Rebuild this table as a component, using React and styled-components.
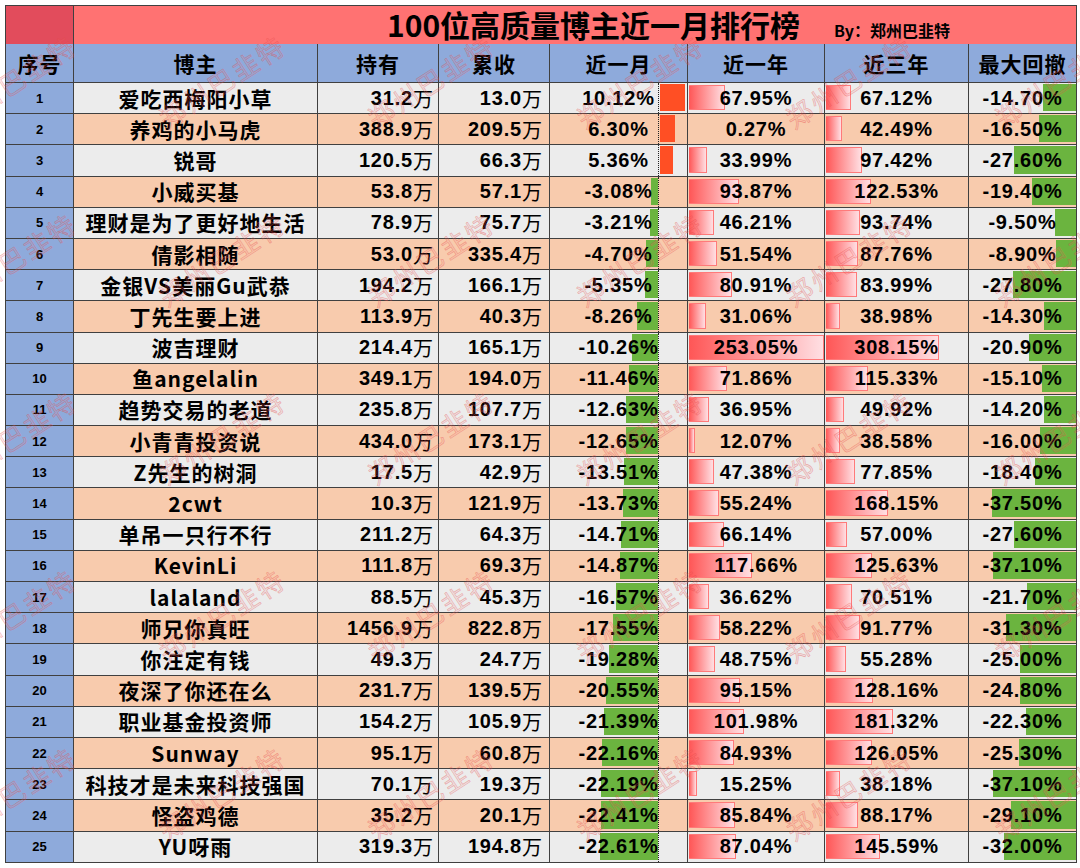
import React from 'react';
import styled, { createGlobalStyle } from 'styled-components';

const COLS = '68px 244px 121px 111px 138px 137px 144px 108px';
const LINE = '#404040';
const CJK = '"Noto Sans CJK SC", "Noto Sans", sans-serif';
const NUM = '"Liberation Sans", Arial, "Noto Sans CJK SC", sans-serif';

const BLUE = '#8eaadb';
const GREY = '#ececec';
const PEACH = '#f8cbad';

const rows = [
    ['爱吃西梅阳小草', '31.2', '13.0', '10.12', '67.95', '67.12', '-14.70'],
    ['养鸡的小马虎', '388.9', '209.5', '6.30', '0.27', '42.49', '-16.50'],
    ['锐哥', '120.5', '66.3', '5.36', '33.99', '97.42', '-27.60'],
    ['小威买基', '53.8', '57.1', '-3.08', '93.87', '122.53', '-19.40'],
    ['理财是为了更好地生活', '78.9', '75.7', '-3.21', '46.21', '93.74', '-9.50'],
    ['倩影相随', '53.0', '335.4', '-4.70', '51.54', '87.76', '-8.90'],
    ['金银VS美丽Gu武恭', '194.2', '166.1', '-5.35', '80.91', '83.99', '-27.80'],
    ['丁先生要上进', '113.9', '40.3', '-8.26', '31.06', '38.98', '-14.30'],
    ['波吉理财', '214.4', '165.1', '-10.26', '253.05', '308.15', '-20.90'],
    ['鱼angelalin', '349.1', '194.0', '-11.46', '71.86', '115.33', '-15.10'],
    ['趋势交易的老道', '235.8', '107.7', '-12.63', '36.95', '49.92', '-14.20'],
    ['小青青投资说', '434.0', '173.1', '-12.65', '12.07', '38.58', '-16.00'],
    ['Z先生的树洞', '17.5', '42.9', '-13.51', '47.38', '77.85', '-18.40'],
    ['2cwt', '10.3', '121.9', '-13.73', '55.24', '168.15', '-37.50'],
    ['单吊一只行不行', '211.2', '64.3', '-14.71', '66.14', '57.00', '-27.60'],
    ['KevinLi', '111.8', '69.3', '-14.87', '117.66', '125.63', '-37.10'],
    ['lalaland', '88.5', '45.3', '-16.57', '36.62', '70.51', '-21.70'],
    ['师兄你真旺', '1456.9', '822.8', '-17.55', '58.22', '91.77', '-31.30'],
    ['你注定有钱', '49.3', '24.7', '-19.28', '48.75', '55.28', '-25.00'],
    ['夜深了你还在么', '231.7', '139.5', '-20.55', '95.15', '128.16', '-24.80'],
    ['职业基金投资师', '154.2', '105.9', '-21.39', '101.98', '181.32', '-22.30'],
    ['Sunway', '95.1', '60.8', '-22.16', '84.93', '126.05', '-25.30'],
    ['科技才是未来科技强国', '70.1', '19.3', '-22.19', '15.25', '38.18', '-37.10'],
    ['怪盗鸡德', '35.2', '20.1', '-22.41', '85.84', '88.17', '-29.10'],
    ['YU呀雨', '319.3', '194.8', '-22.61', '87.04', '145.59', '-32.00'],
];

const headers = ['序号', '博主', '持有', '累收', '近一月', '近一年', '近三年', '最大回撤'];

const GlobalStyle = createGlobalStyle`
    *, *::before, *::after { box-sizing: border-box; }
    html, body { margin: 0; background: #fff; }
    body { font-family: ${CJK}; color: #000; }
`;

const Page = styled.div`
    position: relative;
    width: 1080px;
    height: 868px;
    padding: 5px 0 0 5px;
    overflow: hidden;
`;

const Sheet = styled.div`
    width: 1072px;
    border-left: 1px solid ${LINE};
    border-top: 1px solid ${LINE};
`;

const GridRow = styled.div`
    display: grid;
    grid-template-columns: ${COLS};
    height: ${p => p.$h}px;
`;

const Cell = styled.div`
    position: relative;
    display: flex;
    align-items: center;
    justify-content: center;
    overflow: hidden;
    border-right: 1px solid ${LINE};
    border-bottom: 1px solid ${LINE};
    background: ${p => p.$bg || 'transparent'};
`;

const TitleCorner = styled(Cell)`
    background: #e24c5c;
`;

const TitleBar = styled.div`
    grid-column: 2 / span 7;
    display: flex;
    align-items: baseline;
    gap: 34px;
    padding: 0 0 0 313px;
    background: #ff7272;
    border-right: 1px solid ${LINE};
    border-bottom: 1px solid ${LINE};
    line-height: 37px;
`;

const Title = styled.span`
    font-size: 30px;
    font-weight: 700;
`;

const Byline = styled.span`
    font-size: 16px;
    font-weight: 700;
`;

const HeaderCell = styled(Cell)`
    background: ${BLUE};
    font-size: 21px;
    font-weight: 700;
    letter-spacing: 1px;
`;

const IndexCell = styled(Cell)`
    background: ${BLUE};
    font-family: ${NUM};
    font-size: 13px;
    font-weight: 700;
`;

const NameCell = styled(Cell)`
    padding-bottom: 1px;
    font-size: 21px;
    font-weight: 700;
    letter-spacing: 1px;
    white-space: nowrap;
`;

const AmountCell = styled(Cell)`
    justify-content: flex-end;
    padding-right: ${p => p.$pad}px;
    font-family: ${NUM};
    font-size: 20px;
    font-weight: 700;
    letter-spacing: 0.8px;
`;

const Wan = styled.span`
    font-family: ${CJK};
    font-weight: 400;
    letter-spacing: 0;
`;

const Value = styled.span`
    position: relative;
    z-index: 1;
    font-family: ${NUM};
    font-size: 20px;
    font-weight: 700;
    letter-spacing: 0.8px;
`;

const Axis = styled.div`
    position: absolute;
    top: 0;
    bottom: 0;
    left: 108px;
    border-left: 1px dotted #222;
`;

const SolidBar = styled.div`
    position: absolute;
    top: 1px;
    bottom: 2px;
    background: ${p => (p.$up ? '#ff4f24' : '#6bb43f')};
`;

const GradientBar = styled.div`
    position: absolute;
    top: 2px;
    bottom: 3px;
    left: 1px;
    background: linear-gradient(90deg, #ff5656 0%, #ffdfe3 100%);
    border: 1px solid #ff7a7a;
    border-left: none;
`;

const Watermarks = styled.div`
    position: absolute;
    left: -92px;
    top: -9px;
    display: grid;
    grid-template-columns: repeat(6, 209px);
    grid-template-rows: repeat(5, 178px);
    pointer-events: none;
    z-index: 5;
`;

const Mark = styled.div`
    display: flex;
    align-items: center;
    justify-content: center;
`;

const MarkText = styled.span`
    transform: rotate(-33deg);
    font-size: 26px;
    font-weight: 400;
    letter-spacing: 3px;
    white-space: nowrap;
    color: rgba(240, 110, 110, 0.12);
    -webkit-text-stroke: 0.6px rgba(230, 70, 70, 0.42);
`;

const pct = v => `${v}%`;

const MonthCell = ({ v, bg }) => {
    const n = parseFloat(v);
    const w = n >= 0 ? n * 2.45 : Math.abs(n) * 2.57 - 0.5;
    const left = n >= 0 ? 110 : 108 - w;
    return (
        <Cell $bg={bg}>
            <SolidBar $up={n >= 0} style={{ left, width: w }} />
            <Axis />
            <Value>{pct(v)}</Value>
        </Cell>
    );
};

const GrowthCell = ({ v, bg, scale }) => {
    const w = parseFloat(v) * scale;
    return (
        <Cell $bg={bg}>
            {w >= 1 && <GradientBar style={{ width: w }} />}
            <Value>{pct(v)}</Value>
        </Cell>
    );
};

const DrawdownCell = ({ v, bg }) => (
    <Cell $bg={bg}>
        <SolidBar style={{ right: 0, width: Math.abs(parseFloat(v)) * 2.25 }} />
        <Value>{pct(v)}</Value>
    </Cell>
);

export default () => {
    return (
        <Page>
            <GlobalStyle />
            <Sheet>
                <GridRow $h={38}>
                    <TitleCorner />
                    <TitleBar>
                        <Title>100位高质量博主近一月排行榜</Title>
                        <Byline>By：郑州巴韭特</Byline>
                    </TitleBar>
                </GridRow>
                <GridRow $h={39}>
                    {headers.map(h => <HeaderCell key={h}>{h}</HeaderCell>)}
                </GridRow>
                {rows.map((r, i) => {
                    const bg = i % 2 === 0 ? GREY : PEACH;
                    return (
                        <GridRow $h={31.2} key={r[0]}>
                            <IndexCell>{i + 1}</IndexCell>
                            <NameCell $bg={bg}>{r[0]}</NameCell>
                            <AmountCell $bg={bg} $pad={5}>{r[1]}<Wan>万</Wan></AmountCell>
                            <AmountCell $bg={bg} $pad={7}>{r[2]}<Wan>万</Wan></AmountCell>
                            <MonthCell v={r[3]} bg={bg} />
                            <GrowthCell v={r[4]} bg={bg} scale={0.535} />
                            <GrowthCell v={r[5]} bg={bg} scale={0.368} />
                            <DrawdownCell v={r[6]} bg={bg} />
                        </GridRow>
                    );
                })}
            </Sheet>
            <Watermarks>
                {Array.from({ length: 30 }).map((_, k) => (
                    <Mark key={k}><MarkText>郑州巴韭特</MarkText></Mark>
                ))}
            </Watermarks>
        </Page>
    );
};
